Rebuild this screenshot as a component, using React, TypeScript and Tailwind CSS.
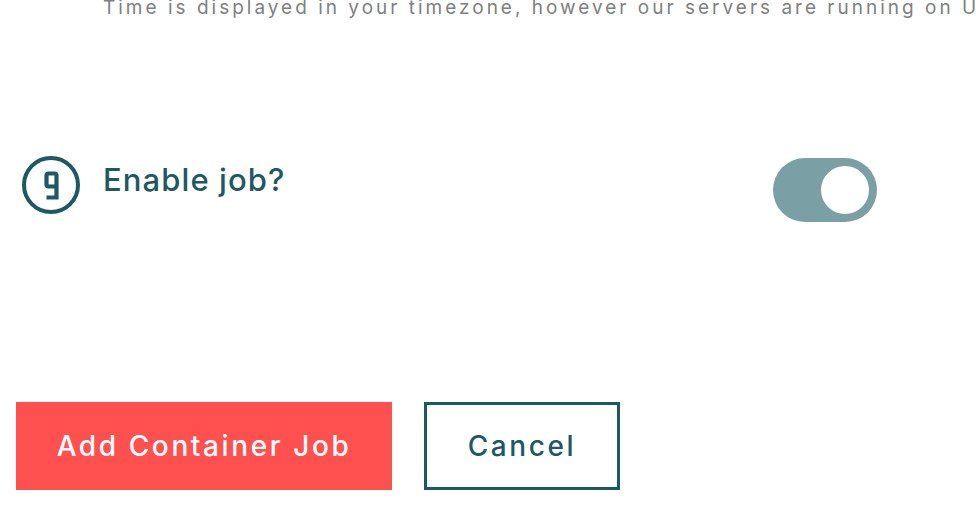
import React from "react";

export default function App() {
  return (
    <div className="w-[976px] h-[516px] bg-white overflow-hidden relative" style={{ fontFamily: "Inter, 'Liberation Sans', sans-serif" }}>
      <div className="pl-[103px] mt-[-6px] whitespace-nowrap text-[19px] leading-[28px] text-[#808080] tracking-[3px]">
        Time is displayed in your timezone, however our servers are running on UTC.
      </div>
      <div className="flex items-start mt-[134px] pl-[22px]">
        <div className="w-[58px] h-[58px] rounded-full border-[4.5px] border-[#1d5962] flex items-center justify-center shrink-0">
          <svg width="15" height="29" viewBox="0 0 15 29">
            <path d="M12.5 15.5 H4.5 Q2.5 15.5 2.5 13.5 V4.5 Q2.5 2.5 4.5 2.5 H10.5 Q12.5 2.5 12.5 4.5 V26.5 H2.5" fill="none" stroke="#1d5962" strokeWidth="4.2" strokeLinejoin="miter" />
          </svg>
        </div>
        <div className="ml-[23px] mt-[4px] text-[31px] leading-[40px] text-[#1d5962] font-medium tracking-[1.1px]">Enable job?</div>
        <div className="ml-auto mr-[99px] mt-[2px] w-[104px] h-[64px] rounded-full bg-[#7a9fa4] flex items-center justify-end pr-[8px]">
          <div className="w-[48px] h-[48px] rounded-full bg-white" />
        </div>
      </div>
      <div className="flex gap-[32px] pl-[16px] mt-[180px]">
        <button className="w-[376px] h-[88px] bg-[#ff5050] text-white text-[28px] font-medium tracking-[2.6px]">Add Container Job</button>
        <button className="w-[196px] h-[88px] border-[3px] border-[#1d5962] text-[#1d5962] text-[28px] font-medium tracking-[2.6px]">Cancel</button>
      </div>
    </div>
  );
}
